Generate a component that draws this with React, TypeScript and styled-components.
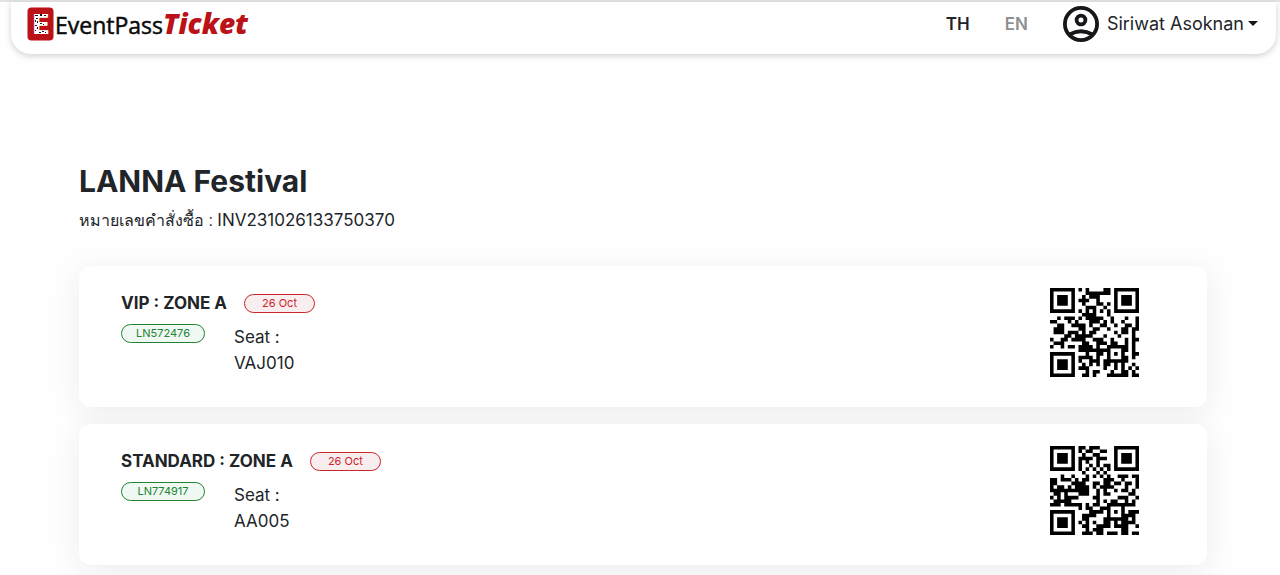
import React from 'react';
import styled, { createGlobalStyle } from 'styled-components';

const GlobalStyle = createGlobalStyle`
  *, *::before, *::after { box-sizing: border-box; }
  body {
    margin: 0;
    background: #fefefe;
    color: #212529;
    font-family: Inter, "Liberation Sans", sans-serif;
    font-size: 17px;
    line-height: 26px;
  }
  h1, h2, p, ul { margin: 0; padding: 0; }
  button { border: 0; padding: 0; background: none; color: inherit; font: inherit; cursor: pointer; }
`;

/* ---------- QR code (version 2, error correction level H, byte mode) ---------- */

const SIZE = 25;
const DATA_WORDS = 16;
const EC_WORDS = 28;

function errorCorrection(data: number[]): number[] {
  const exp: number[] = [];
  const log: number[] = [];
  for (let i = 0, x = 1; i < 255; i++) {
    exp[i] = x;
    log[x] = i;
    x <<= 1;
    if (x & 256) x ^= 285;
  }
  const mul = (a: number, b: number) => (a && b ? exp[(log[a] + log[b]) % 255] : 0);
  let gen = [1];
  for (let i = 0; i < EC_WORDS; i++) {
    const next = new Array(gen.length + 1).fill(0);
    gen.forEach((c, j) => {
      next[j] ^= c;
      next[j + 1] ^= mul(c, exp[i]);
    });
    gen = next;
  }
  const rest = [...data, ...new Array(EC_WORDS).fill(0)];
  for (let i = 0; i < data.length; i++) {
    const lead = rest[i];
    if (lead) gen.forEach((v, j) => { rest[i + j] ^= mul(v, lead); });
  }
  return rest.slice(data.length);
}

const MASKS: Array<(i: number, j: number) => number> = [
  (i, j) => (i + j) % 2,
  (i) => i % 2,
  (_i, j) => j % 3,
  (i, j) => (i + j) % 3,
  (i, j) => ((i >> 1) + Math.floor(j / 3)) % 2,
  (i, j) => ((i * j) % 2) + ((i * j) % 3),
  (i, j) => (((i * j) % 2) + ((i * j) % 3)) % 2,
  (i, j) => (((i * j) % 3) + ((i + j) % 2)) % 2,
];

function encode(text: string, mask: number): number[][] {
  const grid: number[][] = Array.from({ length: SIZE }, () => new Array(SIZE).fill(-1));

  const finder = (row: number, col: number) => {
    for (let i = -1; i < 8; i++) {
      for (let j = -1; j < 8; j++) {
        const y = row + i;
        const x = col + j;
        if (y < 0 || x < 0 || y >= SIZE || x >= SIZE) continue;
        const ring = Math.max(Math.abs(i - 3), Math.abs(j - 3));
        grid[y][x] = ring === 3 || ring <= 1 ? 1 : 0;
      }
    }
  };
  finder(0, 0);
  finder(0, 18);
  finder(18, 0);

  for (let i = -2; i <= 2; i++) {
    for (let j = -2; j <= 2; j++) {
      grid[18 + i][18 + j] = Math.max(Math.abs(i), Math.abs(j)) === 1 ? 0 : 1;
    }
  }
  for (let i = 8; i < 17; i++) grid[6][i] = grid[i][6] = i % 2 ? 0 : 1;

  const format = (2 << 3) | mask;
  let rem = format << 10;
  for (let i = 14; i >= 10; i--) if ((rem >> i) & 1) rem ^= 0x537 << (i - 10);
  const formatBits = ((format << 10) | rem) ^ 0x5412;
  for (let i = 0; i < 15; i++) {
    const bit = (formatBits >> i) & 1;
    if (i < 6) grid[i][8] = bit;
    else if (i < 8) grid[i + 1][8] = bit;
    else grid[SIZE - 15 + i][8] = bit;
    if (i < 8) grid[8][SIZE - 1 - i] = bit;
    else if (i < 9) grid[8][7] = bit;
    else grid[8][14 - i] = bit;
  }
  grid[SIZE - 8][8] = 1;

  const bin = (n: number) => n.toString(2).padStart(8, '0');
  const stream = '0100' + bin(text.length) + [...text].map((c) => bin(c.charCodeAt(0))).join('') + '0000';
  const data: number[] = [];
  for (let i = 0; i < stream.length; i += 8) data.push(parseInt(stream.slice(i, i + 8), 2));
  for (let p = 0; data.length < DATA_WORDS; p++) data.push(p % 2 ? 0x11 : 0xec);

  const words = [...data, ...errorCorrection(data)];
  let k = 0;
  let up = true;
  for (let c = SIZE - 1; c > 0; c -= 2) {
    if (c === 6) c--;
    for (let t = 0; t < SIZE; t++) {
      const row = up ? SIZE - 1 - t : t;
      for (const col of [c, c - 1]) {
        if (grid[row][col] !== -1) continue;
        const bit = k < words.length * 8 ? (words[k >> 3] >> (7 - (k & 7))) & 1 : 0;
        k++;
        grid[row][col] = MASKS[mask](row, col) === 0 ? bit ^ 1 : bit;
      }
    }
    up = !up;
  }
  return grid;
}

const QrImage = styled.svg`
  flex: none;
  width: 89px;
  height: 89px;
  display: block;
`;

function QrCode({ value, mask }: { value: string; mask: number }) {
  const d = encode(value, mask)
    .flatMap((row, y) => row.map((v, x) => (v ? `M${x} ${y}h1v1h-1z` : '')))
    .join('');
  return (
    <QrImage viewBox="0 0 25 25" role="img" aria-label={value}>
      <path d={d} />
    </QrImage>
  );
}

/* ---------- Header ---------- */

const Page = styled.div`
  border-top: 2px solid #e3e3e3;
`;

const Header = styled.header`
  display: flex;
  align-items: center;
  justify-content: space-between;
  margin: 0 4px 0 11px;
  padding: 0 18px 9px 16px;
  height: 52px;
  background: #fff;
  border-radius: 0 0 20px 20px;
  box-shadow: 0 2px 6px rgba(0, 0, 0, 0.18);
`;

const Brand = styled.a`
  display: flex;
  align-items: center;
  gap: 1px;
  color: #0b0b0b;
  text-decoration: none;
  font-family: "Open Sans", sans-serif;
  font-size: 23px;
`;

const BrandName = styled.span`
  -webkit-text-stroke: 0.5px #0b0b0b;
`;

const BrandAccent = styled.span`
  -webkit-text-stroke: 0;
  color: #bb1118;
  font-size: 28px;
  font-style: italic;
  font-weight: 800;
`;

const BrandMark = styled.svg`
  width: 27px;
  height: 34px;
`;

const Nav = styled.nav`
  display: flex;
  align-items: center;
`;

const Language = styled.button<{ $muted?: boolean }>`
  margin-right: 35px;
  font-weight: 600;
  color: ${(p) => (p.$muted ? '#8f8f8f' : '#212529')};
`;

const Account = styled.button`
  display: flex;
  align-items: center;
  gap: 8px;
  font-size: 18px;
`;

const Avatar = styled.svg`
  width: 36px;
  height: 36px;
  fill: none;
  stroke: #15171a;
  stroke-width: 3.8;
`;

const AccountName = styled.span`
  display: flex;
  align-items: center;
  gap: 4px;
`;

const Caret = styled.span`
  border: 5px solid transparent;
  border-top-color: #15171a;
  border-bottom: 0;
`;

/* ---------- Order ---------- */

const Main = styled.main`
  margin: 0 73px 0 79px;
  padding: 107px 0 40px;
`;

const EventTitle = styled.h1`
  font-size: 30px;
  font-weight: 700;
  line-height: 40px;
`;

const OrderNumber = styled.p`
  margin-top: 6px;
`;

const ThaiLabel = styled.span`
  font-family: "Liberation Sans", sans-serif;
  font-size: 16px;
`;

const Tickets = styled.ul`
  display: flex;
  flex-direction: column;
  gap: 17px;
  margin-top: 32px;
  list-style: none;
`;

const Ticket = styled.li`
  display: flex;
  align-items: flex-start;
  justify-content: space-between;
  padding: 22px 68px 30px 42px;
  background: #fff;
  border-radius: 12px;
  box-shadow: 0 6px 30px rgba(33, 37, 41, 0.08);
`;

const ZoneRow = styled.div`
  display: flex;
  align-items: center;
  gap: 17px;
  height: 30px;
`;

const ZoneName = styled.h2`
  font-size: 17px;
  font-weight: 700;
  line-height: 26px;
`;

const SeatRow = styled.div`
  display: flex;
  align-items: flex-start;
  gap: 29px;
  margin-top: 6px;
`;

const Pill = styled.span<{ $tone: 'date' | 'code' }>`
  min-width: ${(p) => (p.$tone === 'date' ? 71 : 84)}px;
  border: 1px solid;
  border-radius: 10px;
  font-size: 11px;
  line-height: 17px;
  text-align: center;
  color: ${(p) => (p.$tone === 'date' ? '#c9252b' : '#228332')};
  background: ${(p) => (p.$tone === 'date' ? '#f9eeef' : '#eff8f2')};
`;

const Seat = styled.p`
  display: flex;
  flex-direction: column;
`;

const tickets = [
  { zone: 'VIP : ZONE A', date: '26 Oct', code: 'LN572476', seat: 'VAJ010', mask: 0 },
  { zone: 'STANDARD : ZONE A', date: '26 Oct', code: 'LN774917', seat: 'AA005', mask: 7 },
];

const specks = [
  'M8 8h3v1h-3z', 'M13 7h2v2h-2z', 'M17 8h2v1h-2z', 'M9 11h2v1h-2z', 'M8 13h1v2h-1z', 'M10 14h1v2h-1z',
  'M13 16h2v1h-2z', 'M16 17h1v1h-1z', 'M8 18h2v1h-2z', 'M10 20h1v2h-1z', 'M8 23h1v1h-1z', 'M12 25h2v1h-2z',
  'M15 24h2v1h-2z', 'M18 25h1v1h-1z',
].join('');

export default function App() {
  return (
    <Page>
      <GlobalStyle />
      <Header>
        <Brand href="#">
          <BrandMark viewBox="0 0 27 34" aria-hidden="true">
            <rect x="0.5" y="0.5" width="26" height="33" rx="4" fill="#bb1118" />
            <text x="14" y="27" textAnchor="middle" fontFamily="DejaVu Sans, sans-serif" fontWeight="700" fontSize="27" fill="#fff">E</text>
            <path d={specks} fill="#2a1012" />
          </BrandMark>
          <BrandName>EventPass<BrandAccent>Ticket</BrandAccent></BrandName>
        </Brand>
        <Nav>
          <Language type="button">TH</Language>
          <Language type="button" $muted>EN</Language>
          <Account type="button">
            <Avatar viewBox="0 0 36 36" aria-hidden="true">
              <circle cx="18" cy="18" r="16.1" />
              <circle cx="18" cy="14" r="4.4" />
              <path d="M6.5 28.5Q18 22 29.5 28.5" />
            </Avatar>
            <AccountName>
              Siriwat Asoknan
              <Caret />
            </AccountName>
          </Account>
        </Nav>
      </Header>
      <Main>
        <EventTitle>LANNA Festival</EventTitle>
        <OrderNumber>
          <ThaiLabel lang="th">หมายเลขคำสั่งซื้อ : </ThaiLabel>INV231026133750370
        </OrderNumber>
        <Tickets>
          {tickets.map((t) => (
            <Ticket key={t.code}>
              <div>
                <ZoneRow>
                  <ZoneName>{t.zone}</ZoneName>
                  <Pill $tone="date">{t.date}</Pill>
                </ZoneRow>
                <SeatRow>
                  <Pill $tone="code">{t.code}</Pill>
                  <Seat>
                    <span>Seat :</span>
                    <span>{t.seat}</span>
                  </Seat>
                </SeatRow>
              </div>
              <QrCode value={t.code} mask={t.mask} />
            </Ticket>
          ))}
        </Tickets>
      </Main>
    </Page>
  );
}
